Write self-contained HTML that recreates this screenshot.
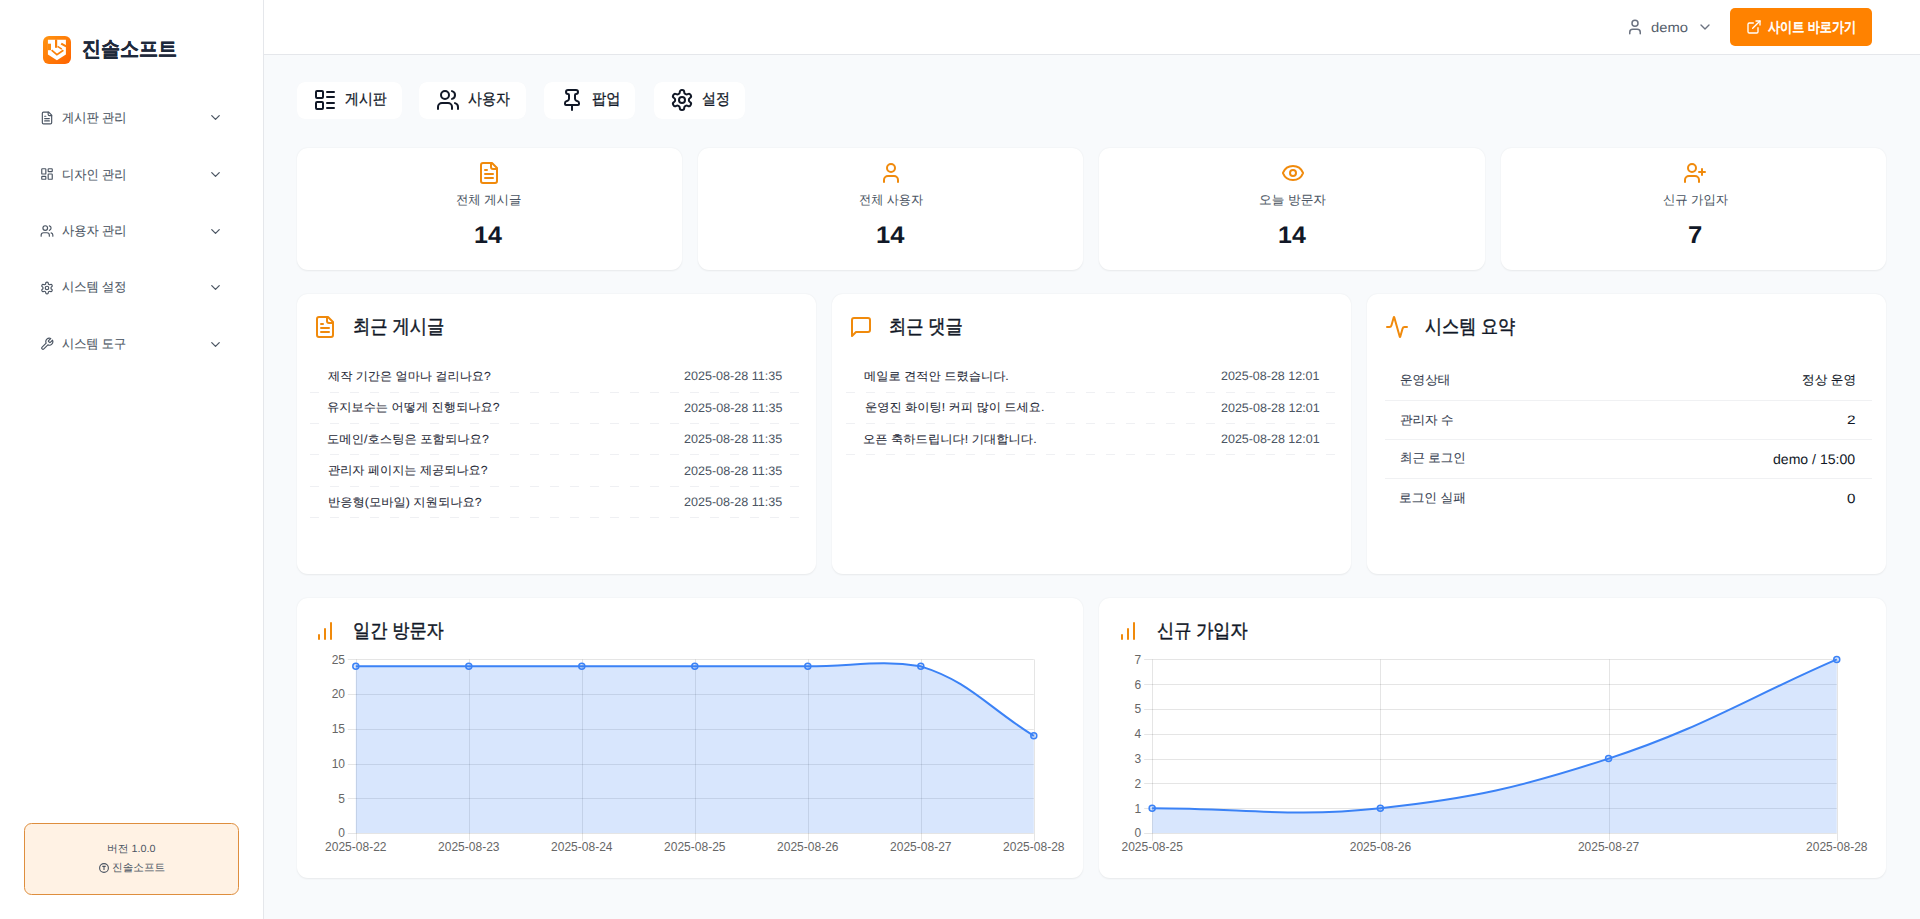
<!DOCTYPE html><html><head><meta charset="utf-8"><style>
*{box-sizing:border-box;margin:0;padding:0}
html,body{width:1920px;height:919px;overflow:hidden;background:#f8fafc;font-family:"Liberation Sans",sans-serif;color:#111827}
.abs{position:absolute}
.tx{position:absolute;white-space:nowrap;transform-origin:0 0;text-rendering:geometricPrecision}
#side{position:absolute;left:0;top:0;width:264px;height:919px;background:#fff;border-right:1px solid #e5e7eb}
#head{position:absolute;left:264px;top:0;width:1656px;height:55px;background:#fff;border-bottom:1px solid #e5e7eb}
.tab{position:absolute;top:82px;height:37px;background:#fff;border-radius:8px;box-shadow:0 0 1px rgba(0,0,0,0.03)}
.card{position:absolute;background:#fff;border-radius:11px;box-shadow:0 0.5px 2px rgba(0,0,0,0.07)}
.sep{position:absolute;height:1px;background:repeating-linear-gradient(90deg,#eff0f3 0 9px,transparent 9px 20px)}
.sep2{position:absolute;height:1px;background:#f0f1f3}
</style></head><body>
<div id="side"></div>
<svg width="28" height="28" viewBox="0 0 28 28" style="position:absolute;left:43px;top:36px">
<defs><linearGradient id="lg" x1="0" y1="0" x2="1" y2="1"><stop offset="0" stop-color="#ff9410"/><stop offset="1" stop-color="#ff6200"/></linearGradient></defs>
<rect width="28" height="28" rx="6" fill="url(#lg)"/>
<path d="M4.9 3.8H22.9V18.6L13.9 24.2L4.9 18.6Z" fill="#fff"/>
<g stroke="#fb8008" fill="none" stroke-linecap="butt" stroke-linejoin="miter">
<path d="M13.1 3.5V11.8" stroke-width="2.2"/>
<path d="M8.6 14.2L13.9 18.6L20.4 14.2" stroke-width="1.7"/>
<path d="M14.6 10.4L18.8 13.2" stroke-width="1.4"/>
<path d="M18.2 7.6L23.2 10.4" stroke-width="2.2"/>
</g>
<rect x="4.7" y="7.7" width="3.3" height="6.5" fill="#fb8a10"/>
</svg>
<div class="abs" style="left:40px;top:110.9px;width:14px;height:14px;line-height:0"><svg width="14" height="14" viewBox="0 0 24 24" fill="none" stroke="#4b5563" stroke-width="2" stroke-linecap="round" stroke-linejoin="round" ><path d="M15 2H6a2 2 0 0 0-2 2v16a2 2 0 0 0 2 2h12a2 2 0 0 0 2-2V7Z"/><path d="M14 2v4a2 2 0 0 0 2 2h4"/><path d="M10 9H8"/><path d="M16 13H8"/><path d="M16 17H8"/></svg></div>
<div class="abs" style="left:207.6px;top:110.4px;width:15px;height:15px;line-height:0"><svg width="15" height="15" viewBox="0 0 24 24" fill="none" stroke="#4b5563" stroke-width="2" stroke-linecap="round" stroke-linejoin="round" ><path d="m6 9 6 6 6-6"/></svg></div>
<div class="abs" style="left:40px;top:167.45px;width:14px;height:14px;line-height:0"><svg width="14" height="14" viewBox="0 0 24 24" fill="none" stroke="#4b5563" stroke-width="2" stroke-linecap="round" stroke-linejoin="round" ><rect width="7" height="9" x="3" y="3" rx="1"/><rect width="7" height="5" x="14" y="3" rx="1"/><rect width="7" height="9" x="14" y="12" rx="1"/><rect width="7" height="5" x="3" y="16" rx="1"/></svg></div>
<div class="abs" style="left:207.6px;top:166.95px;width:15px;height:15px;line-height:0"><svg width="15" height="15" viewBox="0 0 24 24" fill="none" stroke="#4b5563" stroke-width="2" stroke-linecap="round" stroke-linejoin="round" ><path d="m6 9 6 6 6-6"/></svg></div>
<div class="abs" style="left:40px;top:224.0px;width:14px;height:14px;line-height:0"><svg width="14" height="14" viewBox="0 0 24 24" fill="none" stroke="#4b5563" stroke-width="2" stroke-linecap="round" stroke-linejoin="round" ><path d="M16 21v-2a4 4 0 0 0-4-4H6a4 4 0 0 0-4 4v2"/><circle cx="9" cy="7" r="4"/><path d="M22 21v-2a4 4 0 0 0-3-3.87"/><path d="M16 3.13a4 4 0 0 1 0 7.75"/></svg></div>
<div class="abs" style="left:207.6px;top:223.5px;width:15px;height:15px;line-height:0"><svg width="15" height="15" viewBox="0 0 24 24" fill="none" stroke="#4b5563" stroke-width="2" stroke-linecap="round" stroke-linejoin="round" ><path d="m6 9 6 6 6-6"/></svg></div>
<div class="abs" style="left:40px;top:280.55px;width:14px;height:14px;line-height:0"><svg width="14" height="14" viewBox="0 0 24 24" fill="none" stroke="#4b5563" stroke-width="2" stroke-linecap="round" stroke-linejoin="round" ><path d="M12.22 2h-.44a2 2 0 0 0-2 2v.18a2 2 0 0 1-1 1.73l-.43.25a2 2 0 0 1-2 0l-.15-.08a2 2 0 0 0-2.73.73l-.22.38a2 2 0 0 0 .73 2.73l.15.1a2 2 0 0 1 1 1.72v.51a2 2 0 0 1-1 1.74l-.15.09a2 2 0 0 0-.73 2.73l.22.38a2 2 0 0 0 2.73.73l.15-.08a2 2 0 0 1 2 0l.43.25a2 2 0 0 1 1 1.73V20a2 2 0 0 0 2 2h.44a2 2 0 0 0 2-2v-.18a2 2 0 0 1 1-1.73l.43-.25a2 2 0 0 1 2 0l.15.08a2 2 0 0 0 2.73-.73l.22-.39a2 2 0 0 0-.73-2.73l-.15-.08a2 2 0 0 1-1-1.74v-.5a2 2 0 0 1 1-1.74l.15-.09a2 2 0 0 0 .73-2.73l-.22-.38a2 2 0 0 0-2.73-.73l-.15.08a2 2 0 0 1-2 0l-.43-.25a2 2 0 0 1-1-1.73V4a2 2 0 0 0-2-2z"/><circle cx="12" cy="12" r="3"/></svg></div>
<div class="abs" style="left:207.6px;top:280.05px;width:15px;height:15px;line-height:0"><svg width="15" height="15" viewBox="0 0 24 24" fill="none" stroke="#4b5563" stroke-width="2" stroke-linecap="round" stroke-linejoin="round" ><path d="m6 9 6 6 6-6"/></svg></div>
<div class="abs" style="left:40px;top:337.1px;width:14px;height:14px;line-height:0"><svg width="14" height="14" viewBox="0 0 24 24" fill="none" stroke="#4b5563" stroke-width="2" stroke-linecap="round" stroke-linejoin="round" ><path d="M14.7 6.3a1 1 0 0 0 0 1.4l1.6 1.6a1 1 0 0 0 1.4 0l3.77-3.77a6 6 0 0 1-7.94 7.94l-6.91 6.91a2.12 2.12 0 0 1-3-3l6.91-6.91a6 6 0 0 1 7.94-7.94l-3.76 3.76z"/></svg></div>
<div class="abs" style="left:207.6px;top:336.6px;width:15px;height:15px;line-height:0"><svg width="15" height="15" viewBox="0 0 24 24" fill="none" stroke="#4b5563" stroke-width="2" stroke-linecap="round" stroke-linejoin="round" ><path d="m6 9 6 6 6-6"/></svg></div>
<div class="abs" style="left:24px;top:823px;width:215px;height:72px;background:#fff2e4;border:1px solid #de8e3e;border-radius:7.5px"></div>
<svg width="10" height="10" viewBox="0 0 10 10" style="position:absolute;left:99.2px;top:862.8px"><circle cx="5" cy="5" r="4.4" fill="none" stroke="#4b5563" stroke-width="1.1"/><path d="M3.3 3.4h3.4M5 3.4v3.6" stroke="#4b5563" stroke-width="1.1" fill="none"/></svg>
<div id="head"></div>
<div class="abs" style="left:1625.9px;top:17.9px;width:18px;height:18px;line-height:0"><svg width="18" height="18" viewBox="0 0 24 24" fill="none" stroke="#6b7280" stroke-width="2" stroke-linecap="round" stroke-linejoin="round" ><path d="M19 21v-2a4 4 0 0 0-4-4H9a4 4 0 0 0-4 4v2"/><circle cx="12" cy="7" r="4"/></svg></div>
<div class="abs" style="left:1696.7px;top:18.7px;width:16px;height:16px;line-height:0"><svg width="16" height="16" viewBox="0 0 24 24" fill="none" stroke="#6b7280" stroke-width="2" stroke-linecap="round" stroke-linejoin="round" ><path d="m6 9 6 6 6-6"/></svg></div>
<div class="abs" style="left:1730px;top:8px;width:142px;height:38px;background:#ff8200;border-radius:5px"></div>
<div class="abs" style="left:1745.8px;top:18.9px;width:16px;height:16px;line-height:0"><svg width="16" height="16" viewBox="0 0 24 24" fill="none" stroke="#ffffff" stroke-width="2" stroke-linecap="round" stroke-linejoin="round" ><path d="M15 3h6v6"/><path d="M10 14 21 3"/><path d="M18 13v6a2 2 0 0 1-2 2H5a2 2 0 0 1-2-2V8a2 2 0 0 1 2-2h6"/></svg></div>
<div class="tab" style="left:297px;width:105px"></div>
<div class="abs" style="left:313px;top:88px;width:24px;height:24px;line-height:0"><svg width="24" height="24" viewBox="0 0 24 24" fill="none" stroke="#111827" stroke-width="2" stroke-linecap="round" stroke-linejoin="round" ><rect width="7" height="7" x="3" y="3" rx="1"/><rect width="7" height="7" x="3" y="14" rx="1"/><path d="M14 4h7"/><path d="M14 9h7"/><path d="M14 15h7"/><path d="M14 20h7"/></svg></div>
<div class="tab" style="left:419px;width:107px"></div>
<div class="abs" style="left:436px;top:88px;width:24px;height:24px;line-height:0"><svg width="24" height="24" viewBox="0 0 24 24" fill="none" stroke="#111827" stroke-width="2" stroke-linecap="round" stroke-linejoin="round" ><path d="M16 21v-2a4 4 0 0 0-4-4H6a4 4 0 0 0-4 4v2"/><circle cx="9" cy="7" r="4"/><path d="M22 21v-2a4 4 0 0 0-3-3.87"/><path d="M16 3.13a4 4 0 0 1 0 7.75"/></svg></div>
<div class="tab" style="left:544px;width:91px"></div>
<div class="abs" style="left:560px;top:88px;width:24px;height:24px;line-height:0"><svg width="24" height="24" viewBox="0 0 24 24" fill="none" stroke="#111827" stroke-width="2" stroke-linecap="round" stroke-linejoin="round" ><path d="M12 17v5"/><path d="M9 10.76a2 2 0 0 1-1.11 1.79l-1.78.9A2 2 0 0 0 5 15.24V16a1 1 0 0 0 1 1h12a1 1 0 0 0 1-1v-.76a2 2 0 0 0-1.11-1.79l-1.78-.9A2 2 0 0 1 15 10.76V7a1 1 0 0 1 1-1 2 2 0 0 0 0-4H8a2 2 0 0 0 0 4 1 1 0 0 1 1 1z"/></svg></div>
<div class="tab" style="left:654px;width:91px"></div>
<div class="abs" style="left:670px;top:88px;width:24px;height:24px;line-height:0"><svg width="24" height="24" viewBox="0 0 24 24" fill="none" stroke="#111827" stroke-width="2" stroke-linecap="round" stroke-linejoin="round" ><path d="M12.22 2h-.44a2 2 0 0 0-2 2v.18a2 2 0 0 1-1 1.73l-.43.25a2 2 0 0 1-2 0l-.15-.08a2 2 0 0 0-2.73.73l-.22.38a2 2 0 0 0 .73 2.73l.15.1a2 2 0 0 1 1 1.72v.51a2 2 0 0 1-1 1.74l-.15.09a2 2 0 0 0-.73 2.73l.22.38a2 2 0 0 0 2.73.73l.15-.08a2 2 0 0 1 2 0l.43.25a2 2 0 0 1 1 1.73V20a2 2 0 0 0 2 2h.44a2 2 0 0 0 2-2v-.18a2 2 0 0 1 1-1.73l.43-.25a2 2 0 0 1 2 0l.15.08a2 2 0 0 0 2.73-.73l.22-.39a2 2 0 0 0-.73-2.73l-.15-.08a2 2 0 0 1-1-1.74v-.5a2 2 0 0 1 1-1.74l.15-.09a2 2 0 0 0 .73-2.73l-.22-.38a2 2 0 0 0-2.73-.73l-.15.08a2 2 0 0 1-2 0l-.43-.25a2 2 0 0 1-1-1.73V4a2 2 0 0 0-2-2z"/><circle cx="12" cy="12" r="3"/></svg></div>
<div class="card" style="left:296.50px;top:148px;width:385.38px;height:122px"></div>
<div class="abs" style="left:477.1px;top:161px;width:24px;height:24px;line-height:0"><svg width="24" height="24" viewBox="0 0 24 24" fill="none" stroke="#f08a0c" stroke-width="2" stroke-linecap="round" stroke-linejoin="round" ><path d="M15 2H6a2 2 0 0 0-2 2v16a2 2 0 0 0 2 2h12a2 2 0 0 0 2-2V7Z"/><path d="M14 2v4a2 2 0 0 0 2 2h4"/><path d="M10 9H8"/><path d="M16 13H8"/><path d="M16 17H8"/></svg></div>
<div class="card" style="left:697.88px;top:148px;width:385.38px;height:122px"></div>
<div class="abs" style="left:878.7px;top:161px;width:24px;height:24px;line-height:0"><svg width="24" height="24" viewBox="0 0 24 24" fill="none" stroke="#f08a0c" stroke-width="2" stroke-linecap="round" stroke-linejoin="round" ><path d="M19 21v-2a4 4 0 0 0-4-4H9a4 4 0 0 0-4 4v2"/><circle cx="12" cy="7" r="4"/></svg></div>
<div class="card" style="left:1099.25px;top:148px;width:385.38px;height:122px"></div>
<div class="abs" style="left:1281px;top:161px;width:24px;height:24px;line-height:0"><svg width="24" height="24" viewBox="0 0 24 24" fill="none" stroke="#f08a0c" stroke-width="2" stroke-linecap="round" stroke-linejoin="round" ><path d="M2.062 12.348a1 1 0 0 1 0-.696 10.75 10.75 0 0 1 19.876 0 1 1 0 0 1 0 .696 10.75 10.75 0 0 1-19.876 0"/><circle cx="12" cy="12" r="3"/></svg></div>
<div class="card" style="left:1500.62px;top:148px;width:385.38px;height:122px"></div>
<div class="abs" style="left:1683px;top:161px;width:24px;height:24px;line-height:0"><svg width="24" height="24" viewBox="0 0 24 24" fill="none" stroke="#f08a0c" stroke-width="2" stroke-linecap="round" stroke-linejoin="round" ><path d="M16 21v-2a4 4 0 0 0-4-4H6a4 4 0 0 0-4 4v2"/><circle cx="9" cy="7" r="4"/><line x1="19" x2="19" y1="8" y2="14"/><line x1="22" x2="16" y1="11" y2="11"/></svg></div>
<div class="card" style="left:296.50px;top:294px;width:519.17px;height:280px"></div>
<div class="abs" style="left:312.9px;top:315px;width:24px;height:24px;line-height:0"><svg width="24" height="24" viewBox="0 0 24 24" fill="none" stroke="#f08a0c" stroke-width="2" stroke-linecap="round" stroke-linejoin="round" ><path d="M15 2H6a2 2 0 0 0-2 2v16a2 2 0 0 0 2 2h12a2 2 0 0 0 2-2V7Z"/><path d="M14 2v4a2 2 0 0 0 2 2h4"/><path d="M10 9H8"/><path d="M16 13H8"/><path d="M16 17H8"/></svg></div>
<div class="card" style="left:831.67px;top:294px;width:519.17px;height:280px"></div>
<div class="abs" style="left:848.9px;top:315px;width:24px;height:24px;line-height:0"><svg width="24" height="24" viewBox="0 0 24 24" fill="none" stroke="#f08a0c" stroke-width="2" stroke-linecap="round" stroke-linejoin="round" ><path d="M21 15a2 2 0 0 1-2 2H7l-4 4V5a2 2 0 0 1 2-2h14a2 2 0 0 1 2 2z"/></svg></div>
<div class="card" style="left:1366.83px;top:294px;width:519.17px;height:280px"></div>
<div class="abs" style="left:1385px;top:315px;width:24px;height:24px;line-height:0"><svg width="24" height="24" viewBox="0 0 24 24" fill="none" stroke="#f08a0c" stroke-width="2" stroke-linecap="round" stroke-linejoin="round" ><path d="M22 12h-2.48a2 2 0 0 0-1.93 1.46l-2.35 8.36a.25.25 0 0 1-.48 0L9.24 2.18a.25.25 0 0 0-.48 0l-2.35 8.36A2 2 0 0 1 4.49 12H2"/></svg></div>
<div class="sep" style="left:310px;width:492px;top:392.0px"></div>
<div class="sep" style="left:310px;width:492px;top:423.2px"></div>
<div class="sep" style="left:310px;width:492px;top:454.4px"></div>
<div class="sep" style="left:310px;width:492px;top:485.6px"></div>
<div class="sep" style="left:310px;width:492px;top:516.8px"></div>
<div class="sep" style="left:846px;width:492px;top:392.0px"></div>
<div class="sep" style="left:846px;width:492px;top:423.2px"></div>
<div class="sep" style="left:846px;width:492px;top:454.4px"></div>
<div class="sep2" style="left:1385px;width:487px;top:400.4px"></div>
<div class="sep2" style="left:1385px;width:487px;top:439.2px"></div>
<div class="sep2" style="left:1385px;width:487px;top:478.3px"></div>
<div class="card" style="left:296.50px;top:598px;width:786.75px;height:280px"><svg class="chart" width="786.75" height="280" viewBox="0 0 786.75 280" style="position:absolute;left:0;top:0" font-family="Liberation Sans, sans-serif" font-size="12" fill="#666"><line x1="50.80000000000001" x2="736.8" y1="235.5" y2="235.5" stroke="rgba(0,0,0,0.1)" stroke-width="1"/><text x="48.0" y="239.3" text-anchor="end">0</text><line x1="50.80000000000001" x2="736.8" y1="200.5" y2="200.5" stroke="rgba(0,0,0,0.1)" stroke-width="1"/><text x="48.0" y="204.6" text-anchor="end">5</text><line x1="50.80000000000001" x2="736.8" y1="166.5" y2="166.5" stroke="rgba(0,0,0,0.1)" stroke-width="1"/><text x="48.0" y="169.9" text-anchor="end">10</text><line x1="50.80000000000001" x2="736.8" y1="131.5" y2="131.5" stroke="rgba(0,0,0,0.1)" stroke-width="1"/><text x="48.0" y="135.1" text-anchor="end">15</text><line x1="50.80000000000001" x2="736.8" y1="96.5" y2="96.5" stroke="rgba(0,0,0,0.1)" stroke-width="1"/><text x="48.0" y="100.4" text-anchor="end">20</text><line x1="50.80000000000001" x2="736.8" y1="61.5" y2="61.5" stroke="rgba(0,0,0,0.1)" stroke-width="1"/><text x="48.0" y="65.7" text-anchor="end">25</text><line x1="59.5" x2="59.5" y1="61.39999999999998" y2="243" stroke="rgba(0,0,0,0.1)" stroke-width="1"/><text x="58.8" y="253.3" text-anchor="middle">2025-08-22</text><line x1="172.5" x2="172.5" y1="61.39999999999998" y2="243" stroke="rgba(0,0,0,0.1)" stroke-width="1"/><text x="171.8" y="253.3" text-anchor="middle">2025-08-23</text><line x1="285.5" x2="285.5" y1="61.39999999999998" y2="243" stroke="rgba(0,0,0,0.1)" stroke-width="1"/><text x="284.8" y="253.3" text-anchor="middle">2025-08-24</text><line x1="398.5" x2="398.5" y1="61.39999999999998" y2="243" stroke="rgba(0,0,0,0.1)" stroke-width="1"/><text x="397.8" y="253.3" text-anchor="middle">2025-08-25</text><line x1="511.5" x2="511.5" y1="61.39999999999998" y2="243" stroke="rgba(0,0,0,0.1)" stroke-width="1"/><text x="510.8" y="253.3" text-anchor="middle">2025-08-26</text><line x1="624.5" x2="624.5" y1="61.39999999999998" y2="243" stroke="rgba(0,0,0,0.1)" stroke-width="1"/><text x="623.8" y="253.3" text-anchor="middle">2025-08-27</text><line x1="737.5" x2="737.5" y1="61.39999999999998" y2="243" stroke="rgba(0,0,0,0.1)" stroke-width="1"/><text x="736.8" y="253.3" text-anchor="middle">2025-08-28</text><path d="M58.80,68.34 C104.00,68.34 126.60,68.34 171.80,68.34 C217.00,68.34 239.60,68.34 284.80,68.34 C330.00,68.34 352.60,68.34 397.80,68.34 C443.00,68.34 465.60,68.34 510.80,68.34 C556.00,68.34 582.21,61.40 623.80,68.34 C672.61,83.34 691.60,110.01 736.80,137.78 L736.80,235 L58.80,235 Z" fill="rgba(59,130,246,0.2)" stroke="none"/><path d="M58.80,68.34 C104.00,68.34 126.60,68.34 171.80,68.34 C217.00,68.34 239.60,68.34 284.80,68.34 C330.00,68.34 352.60,68.34 397.80,68.34 C443.00,68.34 465.60,68.34 510.80,68.34 C556.00,68.34 582.21,61.40 623.80,68.34 C672.61,83.34 691.60,110.01 736.80,137.78" fill="none" stroke="#3b82f6" stroke-width="2"/><circle cx="58.80" cy="68.34" r="3" fill="rgba(59,130,246,0.2)" stroke="#3b82f6" stroke-width="1.5"/><circle cx="171.80" cy="68.34" r="3" fill="rgba(59,130,246,0.2)" stroke="#3b82f6" stroke-width="1.5"/><circle cx="284.80" cy="68.34" r="3" fill="rgba(59,130,246,0.2)" stroke="#3b82f6" stroke-width="1.5"/><circle cx="397.80" cy="68.34" r="3" fill="rgba(59,130,246,0.2)" stroke="#3b82f6" stroke-width="1.5"/><circle cx="510.80" cy="68.34" r="3" fill="rgba(59,130,246,0.2)" stroke="#3b82f6" stroke-width="1.5"/><circle cx="623.80" cy="68.34" r="3" fill="rgba(59,130,246,0.2)" stroke="#3b82f6" stroke-width="1.5"/><circle cx="736.80" cy="137.78" r="3" fill="rgba(59,130,246,0.2)" stroke="#3b82f6" stroke-width="1.5"/></svg></div>
<div class="card" style="left:1099.25px;top:598px;width:786.75px;height:280px"><svg class="chart" width="786.75" height="280" viewBox="0 0 786.75 280" style="position:absolute;left:0;top:0" font-family="Liberation Sans, sans-serif" font-size="12" fill="#666"><line x1="45.15000000000009" x2="737.75" y1="235.5" y2="235.5" stroke="rgba(0,0,0,0.1)" stroke-width="1"/><text x="42.25" y="239.3" text-anchor="end">0</text><line x1="45.15000000000009" x2="737.75" y1="210.5" y2="210.5" stroke="rgba(0,0,0,0.1)" stroke-width="1"/><text x="42.25" y="214.5" text-anchor="end">1</text><line x1="45.15000000000009" x2="737.75" y1="185.5" y2="185.5" stroke="rgba(0,0,0,0.1)" stroke-width="1"/><text x="42.25" y="189.7" text-anchor="end">2</text><line x1="45.15000000000009" x2="737.75" y1="161.5" y2="161.5" stroke="rgba(0,0,0,0.1)" stroke-width="1"/><text x="42.25" y="164.9" text-anchor="end">3</text><line x1="45.15000000000009" x2="737.75" y1="136.5" y2="136.5" stroke="rgba(0,0,0,0.1)" stroke-width="1"/><text x="42.25" y="140.1" text-anchor="end">4</text><line x1="45.15000000000009" x2="737.75" y1="111.5" y2="111.5" stroke="rgba(0,0,0,0.1)" stroke-width="1"/><text x="42.25" y="115.3" text-anchor="end">5</text><line x1="45.15000000000009" x2="737.75" y1="86.5" y2="86.5" stroke="rgba(0,0,0,0.1)" stroke-width="1"/><text x="42.25" y="90.5" text-anchor="end">6</text><line x1="45.15000000000009" x2="737.75" y1="61.5" y2="61.5" stroke="rgba(0,0,0,0.1)" stroke-width="1"/><text x="42.25" y="65.7" text-anchor="end">7</text><line x1="53.5" x2="53.5" y1="61.39999999999998" y2="243" stroke="rgba(0,0,0,0.1)" stroke-width="1"/><text x="53.2" y="253.3" text-anchor="middle">2025-08-25</text><line x1="281.5" x2="281.5" y1="61.39999999999998" y2="243" stroke="rgba(0,0,0,0.1)" stroke-width="1"/><text x="281.4" y="253.3" text-anchor="middle">2025-08-26</text><line x1="510.5" x2="510.5" y1="61.39999999999998" y2="243" stroke="rgba(0,0,0,0.1)" stroke-width="1"/><text x="509.6" y="253.3" text-anchor="middle">2025-08-27</text><line x1="738.5" x2="738.5" y1="61.39999999999998" y2="243" stroke="rgba(0,0,0,0.1)" stroke-width="1"/><text x="737.8" y="253.3" text-anchor="middle">2025-08-28</text><path d="M53.15,210.20 C144.43,210.20 191.12,220.01 281.35,210.20 C373.68,200.17 421.17,189.42 509.55,160.60 C603.73,129.90 646.47,101.08 737.75,61.40 L737.75,235 L53.15,235 Z" fill="rgba(59,130,246,0.2)" stroke="none"/><path d="M53.15,210.20 C144.43,210.20 191.12,220.01 281.35,210.20 C373.68,200.17 421.17,189.42 509.55,160.60 C603.73,129.90 646.47,101.08 737.75,61.40" fill="none" stroke="#3b82f6" stroke-width="2"/><circle cx="53.15" cy="210.20" r="3" fill="rgba(59,130,246,0.2)" stroke="#3b82f6" stroke-width="1.5"/><circle cx="281.35" cy="210.20" r="3" fill="rgba(59,130,246,0.2)" stroke="#3b82f6" stroke-width="1.5"/><circle cx="509.55" cy="160.60" r="3" fill="rgba(59,130,246,0.2)" stroke="#3b82f6" stroke-width="1.5"/><circle cx="737.75" cy="61.40" r="3" fill="rgba(59,130,246,0.2)" stroke="#3b82f6" stroke-width="1.5"/></svg></div>
<div class="abs" style="left:312.9px;top:619.1px;width:24px;height:24px;line-height:0"><svg width="24" height="24" viewBox="0 0 24 24" fill="none" stroke="#f08a0c" stroke-width="2" stroke-linecap="round" stroke-linejoin="round" ><line x1="12" x2="12" y1="20" y2="10"/><line x1="18" x2="18" y1="20" y2="4"/><line x1="6" x2="6" y1="20" y2="16"/></svg></div>
<div class="abs" style="left:1115.7px;top:619.1px;width:24px;height:24px;line-height:0"><svg width="24" height="24" viewBox="0 0 24 24" fill="none" stroke="#f08a0c" stroke-width="2" stroke-linecap="round" stroke-linejoin="round" ><line x1="12" x2="12" y1="20" y2="10"/><line x1="18" x2="18" y1="20" y2="4"/><line x1="6" x2="6" y1="20" y2="16"/></svg></div>
<div class="tx" id="t0" style="left:82.049px;top:38.700px;font-size:21.111px;line-height:21.111px;font-weight:700;color:#1e293b;transform:scaleX(0.90087);-webkit-text-stroke:0.2px #1e293b">진솔소프트</div>
<div class="tx" id="t1" style="left:62.190px;top:111.788px;font-size:12.921px;line-height:12.921px;font-weight:400;color:#4b5563;transform:scaleX(0.94755);-webkit-text-stroke:0.12px #4b5563">게시판 관리</div>
<div class="tx" id="t2" style="left:62.169px;top:168.768px;font-size:12.921px;line-height:12.921px;font-weight:400;color:#4b5563;transform:scaleX(0.94786);-webkit-text-stroke:0.12px #4b5563">디자인 관리</div>
<div class="tx" id="t3" style="left:62.190px;top:224.948px;font-size:12.921px;line-height:12.921px;font-weight:400;color:#4b5563;transform:scaleX(0.94755);-webkit-text-stroke:0.12px #4b5563">사용자 관리</div>
<div class="tx" id="t4" style="left:62.311px;top:280.672px;font-size:12.778px;line-height:12.778px;font-weight:400;color:#4b5563;transform:scaleX(0.95635);-webkit-text-stroke:0.12px #4b5563">시스템 설정</div>
<div class="tx" id="t5" style="left:61.713px;top:337.722px;font-size:12.778px;line-height:12.778px;font-weight:400;color:#4b5563;transform:scaleX(0.95278);-webkit-text-stroke:0.12px #4b5563">시스템 도구</div>
<div class="tx" id="t6" style="left:106.723px;top:844.555px;font-size:10.449px;line-height:10.449px;font-weight:400;color:#4b5563;transform:scaleX(1.03173);-webkit-text-stroke:0px #4b5563">버전 1.0.0</div>
<div class="tx" id="t7" style="left:112.255px;top:863.308px;font-size:10.920px;line-height:10.920px;font-weight:400;color:#4b5563;transform:scaleX(0.97457);-webkit-text-stroke:0px #4b5563">진솔소프트</div>
<div class="tx" id="t8" style="left:1650.990px;top:21.378px;font-size:13.514px;line-height:13.514px;font-weight:400;color:#555e6b;transform:scaleX(1.09544);-webkit-text-stroke:0px #555e6b">demo</div>
<div class="tx" id="t9" style="left:1767.520px;top:21.151px;font-size:14.494px;line-height:14.494px;font-weight:400;color:#ffffff;transform:scaleX(0.83697);-webkit-text-stroke:0.7px #ffffff">사이트 바로가기</div>
<div class="tx" id="t10" style="left:344.753px;top:91.583px;font-size:15.169px;line-height:15.169px;font-weight:400;color:#111827;transform:scaleX(0.91555);-webkit-text-stroke:0.3px #111827">게시판</div>
<div class="tx" id="t11" style="left:468.440px;top:92.067px;font-size:15.730px;line-height:15.730px;font-weight:400;color:#111827;transform:scaleX(0.88841);-webkit-text-stroke:0.3px #111827">사용자</div>
<div class="tx" id="t12" style="left:591.708px;top:92.196px;font-size:15.444px;line-height:15.444px;font-weight:400;color:#111827;transform:scaleX(0.92179);-webkit-text-stroke:0.3px #111827">팝업</div>
<div class="tx" id="t13" style="left:702.300px;top:92.178px;font-size:15.618px;line-height:15.618px;font-weight:400;color:#111827;transform:scaleX(0.89605);-webkit-text-stroke:0.3px #111827">설정</div>
<div class="tx" id="t14" style="left:456.417px;top:193.890px;font-size:12.697px;line-height:12.697px;font-weight:400;color:#4b5563;transform:scaleX(0.97497);-webkit-text-stroke:0.05px #4b5563">전체 게시글</div>
<div class="tx" id="t15" style="left:858.649px;top:193.530px;font-size:12.697px;line-height:12.697px;font-weight:400;color:#4b5563;transform:scaleX(0.95790);-webkit-text-stroke:0.05px #4b5563">전체 사용자</div>
<div class="tx" id="t16" style="left:1259.260px;top:194.130px;font-size:12.697px;line-height:12.697px;font-weight:400;color:#4b5563;transform:scaleX(1.00144);-webkit-text-stroke:0.05px #4b5563">오늘 방문자</div>
<div class="tx" id="t17" style="left:1663.370px;top:193.904px;font-size:12.556px;line-height:12.556px;font-weight:400;color:#4b5563;transform:scaleX(0.98371);-webkit-text-stroke:0.05px #4b5563">신규 가입자</div>
<div class="tx" id="t18" style="left:473.878px;top:223.854px;font-size:23.913px;line-height:23.913px;font-weight:700;color:#111827;transform:scaleX(1.04726);-webkit-text-stroke:0px #111827">14</div>
<div class="tx" id="t19" style="left:876.035px;top:224.354px;font-size:23.913px;line-height:23.913px;font-weight:700;color:#111827;transform:scaleX(1.06618);-webkit-text-stroke:0px #111827">14</div>
<div class="tx" id="t20" style="left:1277.980px;top:224.074px;font-size:23.913px;line-height:23.913px;font-weight:700;color:#111827;transform:scaleX(1.04423);-webkit-text-stroke:0px #111827">14</div>
<div class="tx" id="t21" style="left:1687.810px;top:224.298px;font-size:24.265px;line-height:24.265px;font-weight:700;color:#111827;transform:scaleX(1.05786);-webkit-text-stroke:0px #111827">7</div>
<div class="tx" id="t22" style="left:352.892px;top:317.702px;font-size:19.775px;line-height:19.775px;font-weight:400;color:#111827;transform:scaleX(0.87472);-webkit-text-stroke:0.45px #111827">최근 게시글</div>
<div class="tx" id="t23" style="left:888.617px;top:318.002px;font-size:19.775px;line-height:19.775px;font-weight:400;color:#111827;transform:scaleX(0.87383);-webkit-text-stroke:0.45px #111827">최근 댓글</div>
<div class="tx" id="t24" style="left:1425.000px;top:317.724px;font-size:19.556px;line-height:19.556px;font-weight:400;color:#111827;transform:scaleX(0.87354);-webkit-text-stroke:0.45px #111827">시스템 요약</div>
<div class="tx" id="t25" style="left:328.195px;top:370.825px;font-size:11.748px;line-height:11.748px;font-weight:400;color:#1f2937;transform:scaleX(1.03571);-webkit-text-stroke:0.08px #1f2937">제작 기간은 얼마나 걸리나요?</div>
<div class="tx" id="t26" style="left:684.411px;top:370.231px;font-size:12.324px;line-height:12.324px;font-weight:400;color:#4b5563;transform:scaleX(1.01990);-webkit-text-stroke:0px #4b5563">2025-08-28 11:35</div>
<div class="tx" id="t27" style="left:327.370px;top:402.045px;font-size:11.748px;line-height:11.748px;font-weight:400;color:#1f2937;transform:scaleX(1.04124);-webkit-text-stroke:0.08px #1f2937">유지보수는 어떻게 진행되나요?</div>
<div class="tx" id="t28" style="left:684.449px;top:401.951px;font-size:12.324px;line-height:12.324px;font-weight:400;color:#4b5563;transform:scaleX(1.02158);-webkit-text-stroke:0px #4b5563">2025-08-28 11:35</div>
<div class="tx" id="t29" style="left:326.922px;top:433.625px;font-size:11.748px;line-height:11.748px;font-weight:400;color:#1f2937;transform:scaleX(1.05166);-webkit-text-stroke:0.08px #1f2937">도메인/호스팅은 포함되나요?</div>
<div class="tx" id="t30" style="left:684.411px;top:433.071px;font-size:12.324px;line-height:12.324px;font-weight:400;color:#4b5563;transform:scaleX(1.01990);-webkit-text-stroke:0px #4b5563">2025-08-28 11:35</div>
<div class="tx" id="t31" style="left:328.187px;top:464.985px;font-size:11.748px;line-height:11.748px;font-weight:400;color:#1f2937;transform:scaleX(1.03667);-webkit-text-stroke:0.08px #1f2937">관리자 페이지는 제공되나요?</div>
<div class="tx" id="t32" style="left:684.410px;top:464.841px;font-size:12.324px;line-height:12.324px;font-weight:400;color:#4b5563;transform:scaleX(1.02095);-webkit-text-stroke:0px #4b5563">2025-08-28 11:35</div>
<div class="tx" id="t33" style="left:328.451px;top:496.785px;font-size:11.748px;line-height:11.748px;font-weight:400;color:#1f2937;transform:scaleX(1.04710);-webkit-text-stroke:0.08px #1f2937">반응형(모바일) 지원되나요?</div>
<div class="tx" id="t34" style="left:684.411px;top:495.911px;font-size:12.324px;line-height:12.324px;font-weight:400;color:#4b5563;transform:scaleX(1.01990);-webkit-text-stroke:0px #4b5563">2025-08-28 11:35</div>
<div class="tx" id="t35" style="left:863.983px;top:371.025px;font-size:11.748px;line-height:11.748px;font-weight:400;color:#1f2937;transform:scaleX(1.04250);-webkit-text-stroke:0.08px #1f2937">메일로 견적안 드렸습니다.</div>
<div class="tx" id="t36" style="left:1221.060px;top:370.231px;font-size:12.324px;line-height:12.324px;font-weight:400;color:#4b5563;transform:scaleX(1.01203);-webkit-text-stroke:0px #4b5563">2025-08-28 12:01</div>
<div class="tx" id="t37" style="left:864.623px;top:402.145px;font-size:11.748px;line-height:11.748px;font-weight:400;color:#1f2937;transform:scaleX(1.04213);-webkit-text-stroke:0.08px #1f2937">운영진 화이팅! 커피 많이 드세요.</div>
<div class="tx" id="t38" style="left:1220.970px;top:401.651px;font-size:12.324px;line-height:12.324px;font-weight:400;color:#4b5563;transform:scaleX(1.01539);-webkit-text-stroke:0px #4b5563">2025-08-28 12:01</div>
<div class="tx" id="t39" style="left:863.470px;top:433.880px;font-size:11.748px;line-height:11.748px;font-weight:400;color:#1f2937;transform:scaleX(1.04804);-webkit-text-stroke:0.08px #1f2937">오픈 축하드립니다! 기대합니다.</div>
<div class="tx" id="t40" style="left:1220.850px;top:433.071px;font-size:12.324px;line-height:12.324px;font-weight:400;color:#4b5563;transform:scaleX(1.01413);-webkit-text-stroke:0px #4b5563">2025-08-28 12:01</div>
<div class="tx" id="t41" style="left:1399.970px;top:373.930px;font-size:12.697px;line-height:12.697px;font-weight:400;color:#374151;transform:scaleX(0.99440);-webkit-text-stroke:0.1px #374151">운영상태</div>
<div class="tx" id="t42" style="left:1802.160px;top:373.530px;font-size:12.697px;line-height:12.697px;font-weight:400;color:#111827;transform:scaleX(0.99558);-webkit-text-stroke:0.1px #111827">정상 운영</div>
<div class="tx" id="t43" style="left:1399.900px;top:413.584px;font-size:12.360px;line-height:12.360px;font-weight:400;color:#374151;transform:scaleX(1.01448);-webkit-text-stroke:0.1px #374151">관리자 수</div>
<div class="tx" id="t44" style="left:1846.730px;top:414.457px;font-size:12.286px;line-height:12.286px;font-weight:400;color:#111827;transform:scaleX(1.25632);-webkit-text-stroke:0px #111827">2</div>
<div class="tx" id="t45" style="left:1400.300px;top:452.019px;font-size:12.809px;line-height:12.809px;font-weight:400;color:#374151;transform:scaleX(0.97164);-webkit-text-stroke:0.1px #374151">최근 로그인</div>
<div class="tx" id="t46" style="left:1773.280px;top:453.090px;font-size:13.919px;line-height:13.919px;font-weight:400;color:#111827;transform:scaleX(1.01185);-webkit-text-stroke:0px #111827">demo / 15:00</div>
<div class="tx" id="t47" style="left:1399.000px;top:491.919px;font-size:12.809px;line-height:12.809px;font-weight:400;color:#374151;transform:scaleX(0.99045);-webkit-text-stroke:0.1px #374151">로그인 실패</div>
<div class="tx" id="t48" style="left:1846.680px;top:491.693px;font-size:13.380px;line-height:13.380px;font-weight:400;color:#111827;transform:scaleX(1.13088);-webkit-text-stroke:0px #111827">0</div>
<div class="tx" id="t49" style="left:353.041px;top:622.067px;font-size:19.326px;line-height:19.326px;font-weight:400;color:#111827;transform:scaleX(0.89061);-webkit-text-stroke:0.45px #111827">일간 방문자</div>
<div class="tx" id="t50" style="left:1157.480px;top:622.389px;font-size:19.111px;line-height:19.111px;font-weight:400;color:#111827;transform:scaleX(0.89885);-webkit-text-stroke:0.45px #111827">신규 가입자</div>
</body></html>
